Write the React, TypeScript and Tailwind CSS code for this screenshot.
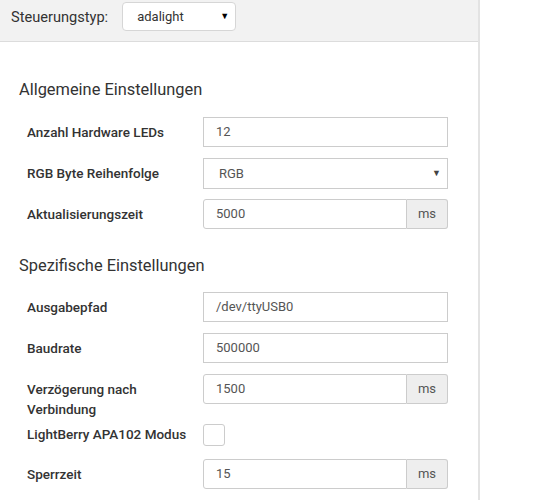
import React from "react";

function Row({ label, children, className = "" }: { label: React.ReactNode; children: React.ReactNode; className?: string }) {
  return (
    <div className={`flex items-start pl-[27px] ${className}`}>
      <div className="w-[176px] pt-[5px] pr-2 text-[13.5px] leading-5 font-medium text-[#333]">{label}</div>
      <div className="w-[245px]">{children}</div>
    </div>
  );
}

function TextInput({ value }: { value: string }) {
  return (
    <div className="h-[30px] w-full border border-[#ccc] bg-white pl-[12px] text-[13px] leading-[28px] text-[#555]">
      {value}
    </div>
  );
}

function AddonInput({ value }: { value: string }) {
  return (
    <div className="flex h-[30px] w-full">
      <div className="flex-1 rounded-l-[3px] border border-[#ccc] bg-white pl-[12px] text-[13px] leading-[28px] text-[#555]">
        {value}
      </div>
      <div className="w-[41px] rounded-r-[3px] border border-l-0 border-[#ccc] bg-[#eee] text-center text-[13px] leading-[28px] text-[#555]">
        ms
      </div>
    </div>
  );
}

function SelectBox({ value }: { value: string }) {
  return (
    <div className="relative h-[31px] w-full border border-[#ccc] bg-white pl-[15px] text-[13px] leading-[29px] text-[#555]">
      {value}
      <span className="absolute right-[6px] top-0 text-[9px] leading-[29px] text-[#444]">▼</span>
    </div>
  );
}

export default function App() {
  return (
    <div className="h-[500px] w-[553px] overflow-hidden bg-white font-['Roboto',sans-serif]">
      <div className="h-[500px] w-[480px] border-r-2 border-[#e3e3e3]">
        <div className="flex h-[42px] items-start border-b border-[#dcdcdc] bg-[#f2f2f2]">
          <div className="pl-[11px] pt-[7px] text-[14.6px] leading-5 text-[#333]">Steuerungstyp:</div>
          <div className="relative ml-[14px] mt-[2px] h-[29px] w-[114px] rounded-[4px] border border-[#d6d6d6] bg-white pl-[14px] text-[13px] leading-[27px] text-[#333]">
            adalight
            <span className="absolute right-[6px] top-0 text-[9px] leading-[27px] text-black">▼</span>
          </div>
        </div>

        <h2 className="ml-[19px] mt-[37px] mb-[16px] text-[16.4px] font-normal leading-[22px] text-[#333]">Allgemeine Einstellungen</h2>

        <Row label="Anzahl Hardware LEDs" className="mb-[11px]">
          <TextInput value="12" />
        </Row>
        <Row label="RGB Byte Reihenfolge" className="mb-[10px]">
          <SelectBox value="RGB" />
        </Row>
        <Row label="Aktualisierungszeit">
          <AddonInput value="5000" />
        </Row>

        <h2 className="ml-[19px] mt-[26px] mb-[15px] text-[16.4px] font-normal leading-[22px] text-[#333]">Spezifische Einstellungen</h2>

        <Row label="Ausgabepfad" className="mb-[11px]">
          <TextInput value="/dev/ttyUSB0" />
        </Row>
        <Row label="Baudrate" className="mb-[11px]">
          <TextInput value="500000" />
        </Row>
        <Row label={<>Verzögerung nach<br />Verbindung</>} className="mb-[5px]">
          <AddonInput value="1500" />
        </Row>
        <div className="mb-[13px] flex items-start pl-[27px]">
          <div className="w-[176px] text-[13.5px] leading-5 font-medium text-[#333]">LightBerry APA102 Modus</div>
          <div className="h-[22px] w-[22px] rounded-[3px] border border-[#ccc] bg-white" />
        </div>
        <Row label="Sperrzeit">
          <AddonInput value="15" />
        </Row>
      </div>
    </div>
  );
}
